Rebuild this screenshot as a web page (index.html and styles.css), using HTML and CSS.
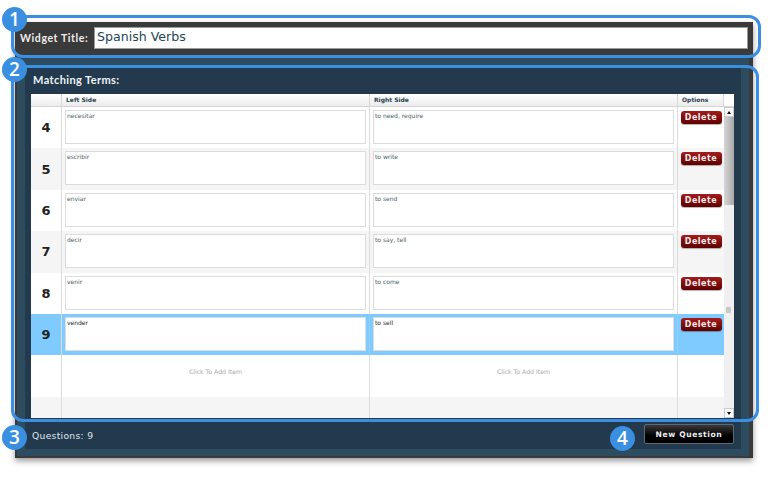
FILE: index.html
```html
<!DOCTYPE html>
<html lang="en">
<head>
<meta charset="utf-8"/>
<title>Spanish Verbs - Widget Editor</title>
<link rel="stylesheet" href="styles.css">
</head>
<body>
<div class="stage">
  <div class="widget">
    <div class="title-bar">
      <label class="title-label" for="widget-title">Widget Title:</label>
      <input class="title-input" id="widget-title" type="text" value="Spanish Verbs"/>
    </div>
    <div class="panel">
      <div class="panel-inner">
        <h2 class="panel-title">Matching Terms:</h2>
        <div class="table">
          <div class="head-row">
            <div class="head-cell head-num"></div>
            <div class="head-cell head-side">Left Side</div>
            <div class="head-cell head-side">Right Side</div>
            <div class="head-cell head-options">Options</div>
            <div class="head-cell head-corner"></div>
          </div>
          <div class="table-body">
            <div class="rows">
              <div class="row">
                <div class="num">4</div>
                <div class="side"><div class="term">necesitar</div></div>
                <div class="side"><div class="term">to need, require</div></div>
                <div class="options"><button class="delete" type="button">Delete</button></div>
              </div>
              <div class="row row-alt">
                <div class="num">5</div>
                <div class="side"><div class="term">escribir</div></div>
                <div class="side"><div class="term">to write</div></div>
                <div class="options"><button class="delete" type="button">Delete</button></div>
              </div>
              <div class="row">
                <div class="num">6</div>
                <div class="side"><div class="term">enviar</div></div>
                <div class="side"><div class="term">to send</div></div>
                <div class="options"><button class="delete" type="button">Delete</button></div>
              </div>
              <div class="row row-alt">
                <div class="num">7</div>
                <div class="side"><div class="term">decir</div></div>
                <div class="side"><div class="term">to say, tell</div></div>
                <div class="options"><button class="delete" type="button">Delete</button></div>
              </div>
              <div class="row">
                <div class="num">8</div>
                <div class="side"><div class="term">venir</div></div>
                <div class="side"><div class="term">to come</div></div>
                <div class="options"><button class="delete" type="button">Delete</button></div>
              </div>
              <div class="row row-active">
                <div class="num">9</div>
                <div class="side"><div class="term">vender</div></div>
                <div class="side"><div class="term">to sell</div></div>
                <div class="options"><button class="delete" type="button">Delete</button></div>
              </div>
              <div class="row row-empty">
                <div class="num"></div>
                <div class="side add-item">Click To Add Item</div>
                <div class="side add-item">Click To Add Item</div>
                <div class="options"></div>
              </div>
              <div class="row row-alt row-last">
                <div class="num"></div>
                <div class="side"></div>
                <div class="side"></div>
                <div class="options"></div>
              </div>
            </div>
            <div class="scrollbar">
              <div class="arrow"><span class="arrow-up"></span></div>
              <div class="track"><div class="thumb"></div><div class="grip"></div></div>
              <div class="arrow"><span class="arrow-down"></span></div>
            </div>
          </div>
        </div>
        <div class="footer">
          <span class="count">Questions: 9</span>
          <button class="new-question" type="button">New Question</button>
        </div>
      </div>
    </div>
  </div>

  <!-- callouts over the screenshot -->
  <div class="callout-box box-one"></div>
  <div class="callout-box box-two"></div>
  <div class="badge badge-one">1</div>
  <div class="badge badge-two">2</div>
  <div class="badge badge-three">3</div>
  <div class="badge badge-four">4</div>
</div>
</body>
</html>
```

FILE: styles.css
```css
/* Widget editor with numbered callouts */
* {
    box-sizing: border-box;
}

body {
    margin: 0;
    background-color: #fff;
    font-family: "DejaVu Sans", Verdana, sans-serif;
    overflow: hidden;
}

.stage {
    position: relative;
    width: 773px;
    height: 479px;
    padding: 22px 0 0 15px;
}

.widget {
    width: 738px;
    height: 436px;
    background-color: #3a3a3a;
    box-shadow: 0 3px 6px rgba(0, 0, 0, 0.4);
    padding: 0 4px 2px 2px;
    display: flex;
    flex-direction: column;
}

.title-bar {
    height: 34px;
    display: flex;
    align-items: flex-start;
    padding: 5px 1px 0 3px;
    flex: none;
}

.title-label {
    width: 74px;
    margin-top: 5px;
    font-family: Lato, sans-serif;
    font-weight: 700;
    font-size: 10.5px;
    letter-spacing: 0.6px;
    color: #eee;
    white-space: nowrap;
}

.title-input {
    width: 654px;
    height: 22px;
    border: 1px solid #9a9a9a;
    background-color: #fff;
    padding: 0 2px 3px 2px;
    font-family: "DejaVu Sans", sans-serif;
    font-size: 12.6px;
    color: #1e4650;
    outline: none;
}

.panel {
    flex: 1;
    background-color: #2d4c60;
    padding: 10px 8px 7px 8px;
    min-height: 0;
}

.panel-inner {
    height: 100%;
    background-color: #233a4e;
    padding: 0 7px 0 6px;
    display: flex;
    flex-direction: column;
}

.panel-title {
    margin: 0;
    height: 28px;
    padding: 7px 0 0 2px;
    font-family: Lato, sans-serif;
    font-weight: 700;
    font-size: 11px;
    letter-spacing: 0.4px;
    color: #eef2f4;
    flex: none;
}

.table {
    height: 324px;
    background-color: #fff;
    display: flex;
    flex-direction: column;
    flex: none;
}

.head-row {
    height: 13px;
    display: grid;
    grid-template-columns: 31px 308px 308px 46px 10px;
    flex: none;
    background: linear-gradient(#fff, #ececec);
    border-bottom: 1px solid #d4d4d4;
}

.head-cell {
    border-right: 1px solid #d8d8d8;
    padding: 2px 0 0 4px;
    font-size: 6px;
    font-weight: 700;
    color: #2c4450;
    white-space: nowrap;
}

.head-corner {
    border-right: 0;
    background-color: #fff;
}

.table-body {
    flex: 1;
    display: flex;
    min-height: 0;
}

.rows {
    width: 693px;
    flex: none;
}

.row {
    height: 41.4px;
    display: grid;
    grid-template-columns: 31px 308px 308px 46px;
    background-color: #fff;
}

.row-alt {
    background-color: #f5f5f5;
}

.row-active {
    background-color: #7fcaff;
}

.row-last {
    height: 21px;
}

.num {
    display: flex;
    align-items: center;
    justify-content: center;
    border-right: 1px solid #dcdcdc;
    font-size: 13px;
    font-weight: 700;
    color: #222;
}

.side {
    border-right: 1px solid #dcdcdc;
    padding: 3px 3px 0 3px;
}

.options {
    display: flex;
    justify-content: center;
    align-items: flex-start;
    padding-top: 4px;
}

.term {
    height: 34px;
    background-color: #fff;
    border: 1px solid #dcdcdc;
    padding: 1px 1px;
    font-size: 6px;
    color: #4a5c64;
    white-space: nowrap;
}

.row-active .term {
    color: #222;
}

.row-active .side {
    border-right-color: #8fd0ff;
}

.add-item {
    padding-top: 13px;
    text-align: center;
    font-size: 6.2px;
    color: #aaa;
}

.delete {
    width: 41px;
    height: 13px;
    padding: 0;
    border: 0;
    border-radius: 3px;
    background: linear-gradient(#a51c1c, #5e0000);
    box-shadow: 0 1px 1px rgba(0, 0, 0, 0.3);
    font-family: "DejaVu Sans", sans-serif;
    font-size: 8px;
    font-weight: 700;
    letter-spacing: 0.5px;
    color: #f8eeee;
}

.scrollbar {
    width: 10px;
    display: flex;
    flex-direction: column;
    background-color: #f0f0f0;
}

.arrow {
    height: 10px;
    display: flex;
    align-items: center;
    justify-content: center;
    background-color: #fafafa;
    border: 1px solid #ccc;
    flex: none;
}

.arrow-up,
.arrow-down {
    width: 0;
    height: 0;
    border-left: 2px solid transparent;
    border-right: 2px solid transparent;
}

.arrow-up {
    border-bottom: 3px solid #111;
}

.arrow-down {
    border-top: 3px solid #111;
}

.track {
    flex: 1;
    position: relative;
}

.thumb {
    height: 88px;
    background: linear-gradient(to right, #d6d6d6, #a8a8a8);
}

.grip {
    position: absolute;
    left: 2px;
    top: 190px;
    width: 5px;
    height: 6px;
    background-color: #c9c9c9;
}

.footer {
    flex: 1;
    display: flex;
    align-items: flex-start;
    justify-content: space-between;
    padding: 6px 0 0 1px;
}

.count {
    margin-top: 6px;
    font-size: 9.2px;
    letter-spacing: 0.3px;
    color: #dfe6ea;
}

.new-question {
    width: 90px;
    height: 20px;
    border: 1px solid #5c6a74;
    border-radius: 2px;
    background: linear-gradient(#3a3a3a, #000 60%);
    font-family: "DejaVu Sans", sans-serif;
    font-size: 7.6px;
    font-weight: 700;
    letter-spacing: 0.6px;
    color: #f0f0f0;
}

.callout-box {
    position: absolute;
    border: 3px solid #3a8fe0;
    border-radius: 12px;
}

.box-one {
    left: 11px;
    top: 15px;
    width: 750px;
    height: 43px;
}

.box-two {
    left: 11px;
    top: 65px;
    width: 748px;
    height: 357px;
}

.badge {
    position: absolute;
    width: 25px;
    height: 25px;
    border-radius: 50%;
    background-color: #3a8fe0;
    color: #fff;
    font-family: "Open Sans", "Liberation Sans", sans-serif;
    font-weight: 600;
    font-size: 19px;
    line-height: 25px;
    text-align: center;
}

.badge-one {
    left: 2px;
    top: 7px;
}

.badge-two {
    left: 2px;
    top: 57px;
}

.badge-three {
    left: 2px;
    top: 425px;
}

.badge-four {
    left: 610px;
    top: 426px;
}
```
